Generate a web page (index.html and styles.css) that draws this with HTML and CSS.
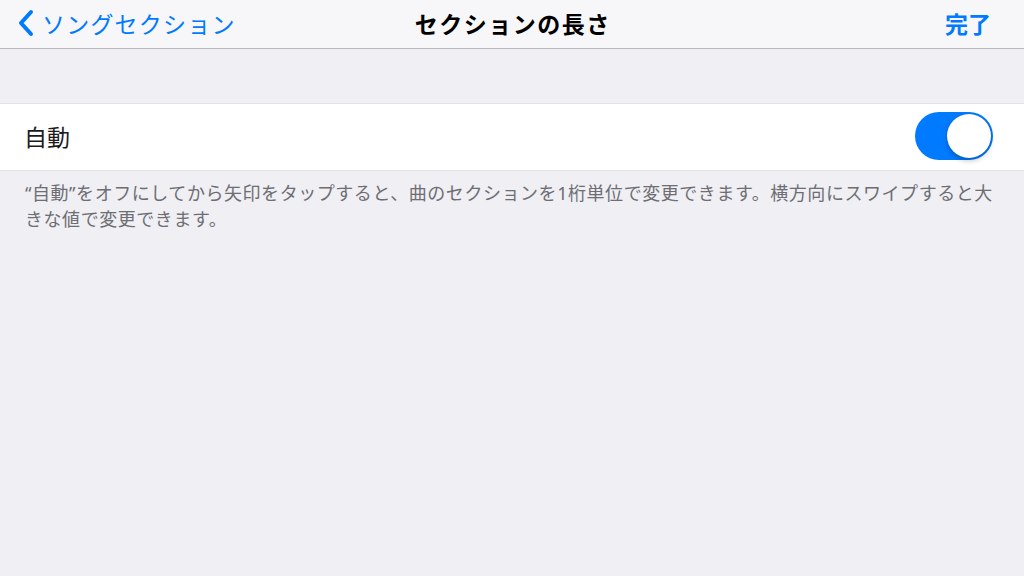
FILE: index.html
```html
<!DOCTYPE html>
<html lang="ja">
<head>
<meta charset="utf-8">
<link rel="stylesheet" href="styles.css">
</head>
<body>
<header class="navbar">
  <div class="nav-left">
    <svg class="chevron" width="16" height="28" viewBox="0 0 16 28"><path d="M13 3 L3 14 L13 25" fill="none" stroke="#007aff" stroke-width="4" stroke-linecap="round" stroke-linejoin="round"/></svg>
    <span class="back-text">ソングセクション</span>
  </div>
  <div class="nav-title">セクションの長さ</div>
  <div class="nav-right">完了</div>
</header>
<main class="content">
  <section class="cell">
    <span class="cell-label">自動</span>
    <div class="switch"><div class="knob"></div></div>
  </section>
  <p class="footer">“自動”をオフにしてから矢印をタップすると、曲のセクションを1桁単位で変更できます。横方向にスワイプすると大きな値で変更できます。</p>
</main>
</body>
</html>
```
FILE: styles.css
```css
* { box-sizing: border-box; }
html, body {
  margin: 0;
  padding: 0;
  width: 1024px;
  height: 576px;
  overflow: hidden;
  background: #efeff4;
  font-family: "Noto Sans", "Noto Sans CJK JP", sans-serif;
}
.navbar {
  height: 49px;
  background: #f7f7f9;
  border-bottom: 1px solid #b8b8bc;
  display: grid;
  grid-template-columns: 1fr auto 1fr;
  align-items: center;
  padding: 0 0 3px 0;
}
.nav-left {
  display: flex;
  align-items: center;
  gap: 8px;
  color: #007aff;
  font-size: 23px;
  padding-left: 18px;
}
.chevron { display: block; }
.back-text { letter-spacing: 1.2px; }
.nav-title {
  font-size: 23px;
  font-weight: bold;
  color: #000;
  letter-spacing: 1.5px;
  padding-left: 1.5px;
}
.nav-right {
  justify-self: end;
  color: #007aff;
  font-size: 23px;
  font-weight: bold;
  padding-right: 33px;
}
.content {
  padding-top: 54px;
}
.cell {
  height: 68px;
  background: #fff;
  border-top: 1px solid #e2e2e6;
  border-bottom: 1px solid #e2e2e6;
  display: flex;
  align-items: center;
  justify-content: space-between;
  padding: 0 31px 2px 24px;
}
.cell-label {
  font-size: 23px;
  color: #1c1c1e;
}
.switch {
  width: 78px;
  height: 48px;
  border-radius: 24px;
  background: #007aff;
  display: flex;
  align-items: center;
  justify-content: flex-end;
  padding: 0 2px;
}
.knob {
  width: 44px;
  height: 44px;
  border-radius: 50%;
  background: #fff;
  box-shadow: 0 3px 5px rgba(0,0,0,0.22), 0 0 1px rgba(0,0,0,0.2);
}
.footer {
  margin: 0;
  padding: 9px 22px 0 25px;
  font-size: 18px;
  line-height: 26px;
  letter-spacing: 0.55px;
  color: #6d6d72;
}
```
